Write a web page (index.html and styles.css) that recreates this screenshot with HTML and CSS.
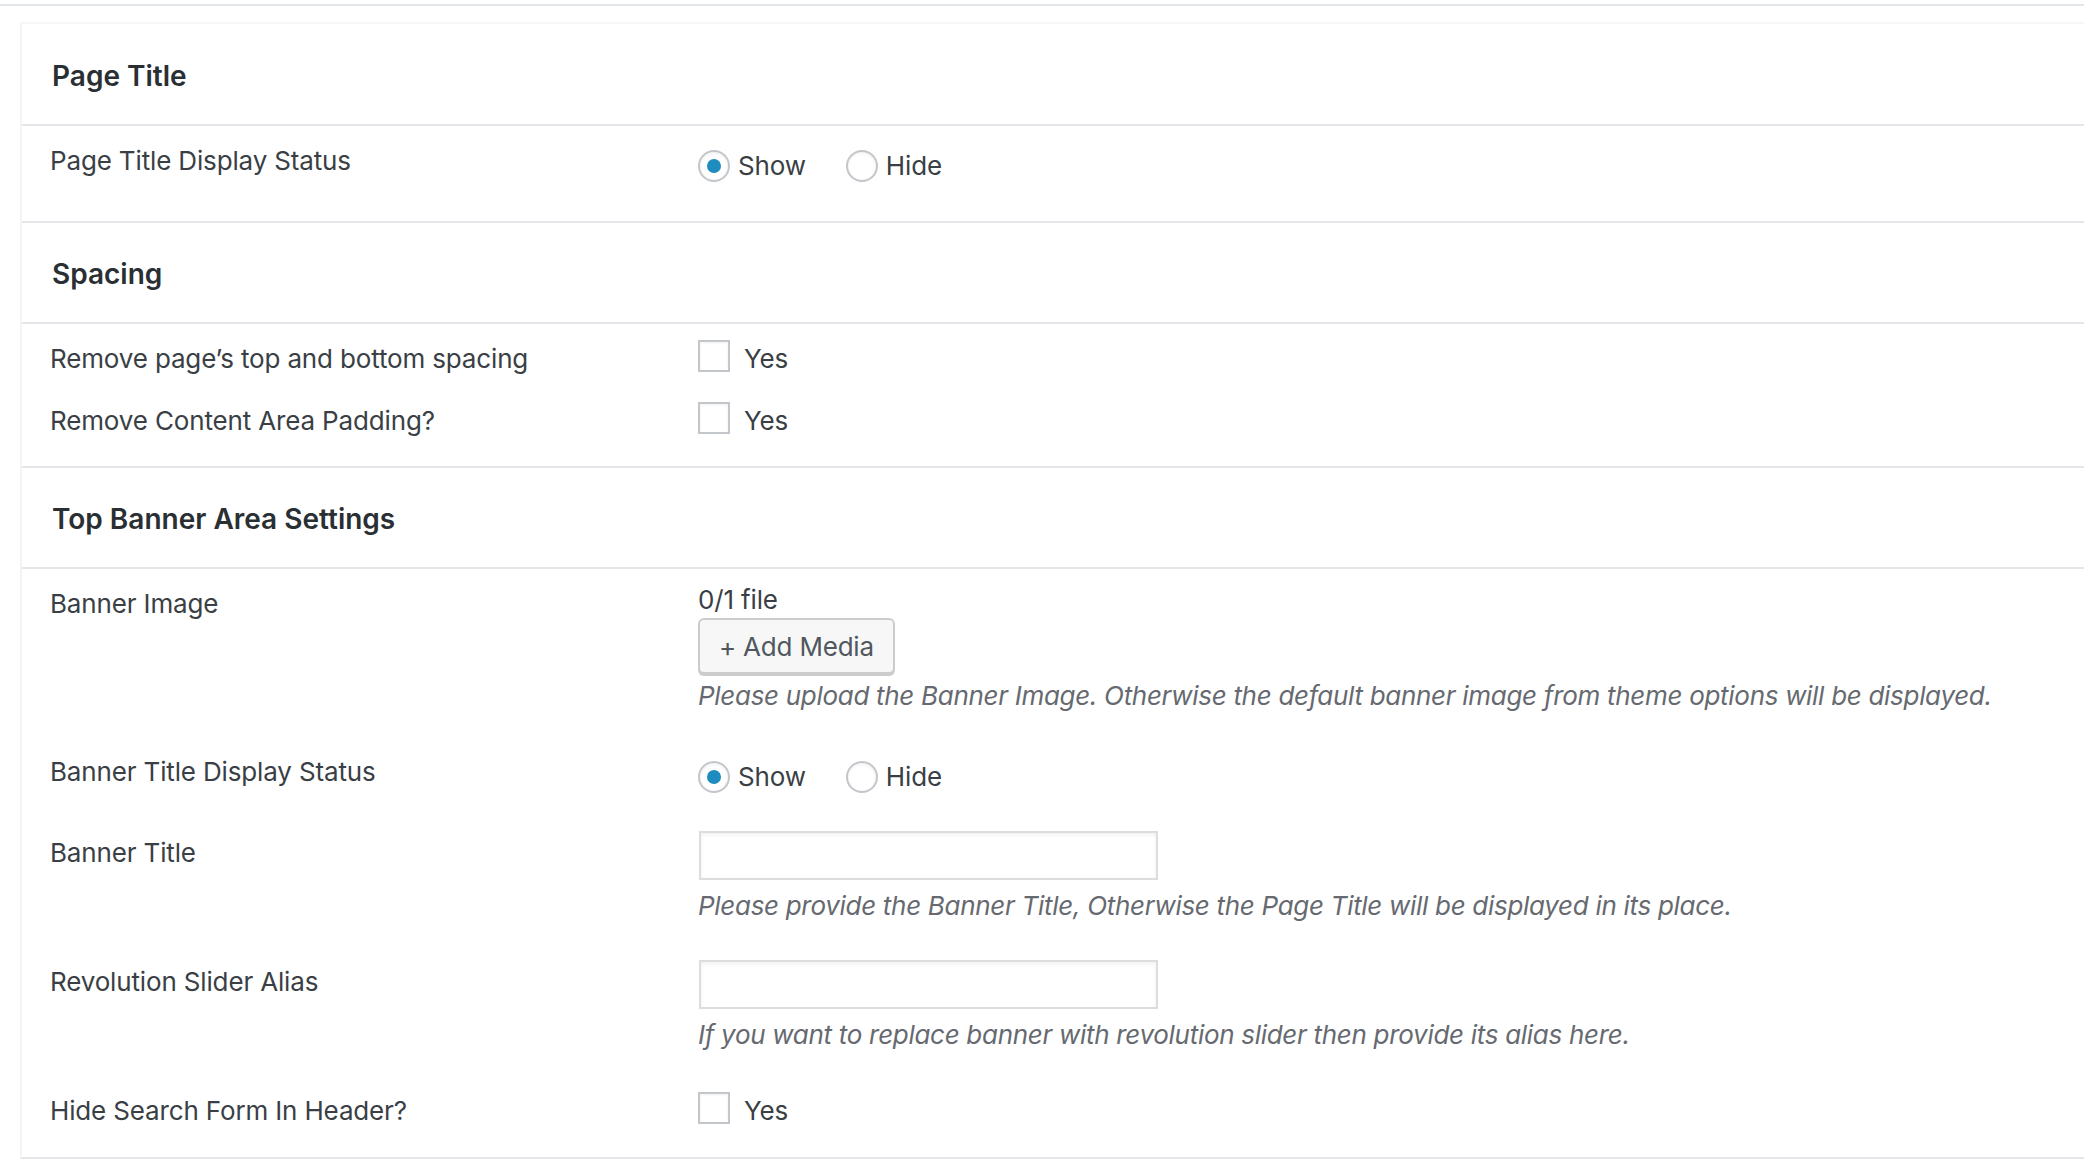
FILE: index.html
```html
<!DOCTYPE html>
<html lang="en">
<head>
<meta charset="utf-8">
<title>Page Settings</title>
<link rel="stylesheet" href="styles.css">
</head>
<body>
<div class="topline"></div>
<div class="panel">
  <section class="group">
    <h2 class="group-title">Page Title</h2>
    <div class="fields fields-first">
      <div class="field">
        <div class="label">Page Title Display Status</div>
        <div class="control">
          <div class="radios">
            <label class="radio-opt"><span class="radio checked"></span>Show</label>
            <label class="radio-opt"><span class="radio"></span>Hide</label>
          </div>
        </div>
      </div>
    </div>
  </section>

  <section class="group">
    <h2 class="group-title">Spacing</h2>
    <div class="fields fields-compact">
      <div class="field">
        <div class="label">Remove page’s top and bottom spacing</div>
        <div class="control">
          <label class="check-opt"><span class="checkbox"></span>Yes</label>
        </div>
      </div>
      <div class="field">
        <div class="label">Remove Content Area Padding?</div>
        <div class="control">
          <label class="check-opt"><span class="checkbox"></span>Yes</label>
        </div>
      </div>
    </div>
  </section>

  <section class="group">
    <h2 class="group-title">Top Banner Area Settings</h2>
    <div class="fields fields-wide">
      <div class="field">
        <div class="label">Banner Image</div>
        <div class="control">
          <div class="file-count">0/1 file</div>
          <button class="btn" type="button">+ Add Media</button>
          <p class="hint hint-btn">Please upload the Banner Image. Otherwise the default banner image from theme options will be displayed.</p>
        </div>
      </div>
      <div class="field">
        <div class="label">Banner Title Display Status</div>
        <div class="control">
          <div class="radios">
            <label class="radio-opt"><span class="radio checked"></span>Show</label>
            <label class="radio-opt"><span class="radio"></span>Hide</label>
          </div>
        </div>
      </div>
      <div class="field">
        <div class="label">Banner Title</div>
        <div class="control">
          <input class="text-input" type="text">
          <p class="hint">Please provide the Banner Title, Otherwise the Page Title will be displayed in its place.</p>
        </div>
      </div>
      <div class="field">
        <div class="label">Revolution Slider Alias</div>
        <div class="control">
          <input class="text-input" type="text">
          <p class="hint">If you want to replace banner with revolution slider then provide its alias here.</p>
        </div>
      </div>
      <div class="field">
        <div class="label">Hide Search Form In Header?</div>
        <div class="control">
          <label class="check-opt"><span class="checkbox"></span>Yes</label>
        </div>
      </div>
    </div>
  </section>
</div>
</body>
</html>
```

FILE: styles.css
```css
html, body {
  margin: 0;
  padding: 0;
  background: #ffffff;
  overflow: hidden;
}

body {
  font-family: Inter, "Noto Sans", "Liberation Sans", sans-serif;
  color: #3a3f45;
  font-size: 26px;
  line-height: 36px;
  letter-spacing: -0.15px;
}

.topline {
  height: 2px;
  margin-top: 4px;
  background: #e2e5ea;
}

.panel {
  margin: 16px 0 0 20px;
  padding-top: 1px;
  border-left: 2px solid #f3f4f5;
  border-top: 2px solid #f5f6f7;
  border-bottom: 2px solid #e4e6ea;
  background: #ffffff;
}

.group-title {
  margin: 0;
  padding: 33px 0 30px 30px;
  font-size: 28px;
  line-height: 36px;
  font-weight: 600;
  letter-spacing: 0;
  color: #2a2f34;
  border-bottom: 2px solid #e4e6ea;
}

.fields {
  padding: 13px 0 27px 28px;
  border-bottom: 2px solid #e4e6ea;
}

.fields-first {
  padding-bottom: 37px;
}

.group:last-child .fields {
  border-bottom: none;
  padding-bottom: 28px;
}

.field {
  display: grid;
  grid-template-columns: 648px 1fr;
  align-items: start;
}

.fields-compact .field + .field {
  margin-top: 22px;
}

.fields-wide .field + .field {
  margin-top: 36px;
}

.label {
  padding-top: 4px;
}

.control {
  min-width: 0;
}

.radios {
  display: flex;
  margin-top: 9px;
}

.radio-opt {
  display: flex;
  align-items: center;
  gap: 8px;
  margin-right: 40px;
}

.radio {
  box-sizing: border-box;
  width: 32px;
  height: 32px;
  border: 2px solid #c3c6ca;
  border-radius: 50%;
  background: #ffffff;
  box-shadow: inset 0 1px 3px rgba(0, 0, 0, 0.08);
  position: relative;
}

.radio.checked::after {
  content: "";
  position: absolute;
  left: 50%;
  top: 50%;
  width: 14px;
  height: 14px;
  margin: -7px 0 0 -7px;
  border-radius: 50%;
  background: #1e8cbe;
}

.check-opt {
  display: flex;
  align-items: flex-start;
  gap: 14px;
  padding-top: 4px;
}

.checkbox {
  flex: none;
  box-sizing: border-box;
  width: 32px;
  height: 32px;
  margin-top: -1px;
  border: 2px solid #c3c6ca;
  background: #ffffff;
  box-shadow: inset 0 1px 3px rgba(0, 0, 0, 0.06);
}

.btn {
  display: block;
  box-sizing: border-box;
  height: 56px;
  padding: 0 19px;
  font-family: inherit;
  font-size: 26px;
  letter-spacing: -0.2px;
  color: #50575e;
  background: #f7f7f7;
  border: 2px solid #cccccc;
  border-radius: 6px;
  box-shadow: 0 2px 0 #cccccc;
}

.text-input {
  display: block;
  box-sizing: border-box;
  width: 459px;
  height: 49px;
  margin: 0 0 0 1px;
  border: 2px solid #dddddd;
  background: #ffffff;
  box-shadow: inset 0 2px 4px rgba(0, 0, 0, 0.06);
}

.hint {
  margin: 8px 0 0;
  font-style: italic;
  letter-spacing: -0.3px;
  color: #666a70;
}

.hint-btn {
  margin-top: 4px;
}
```
